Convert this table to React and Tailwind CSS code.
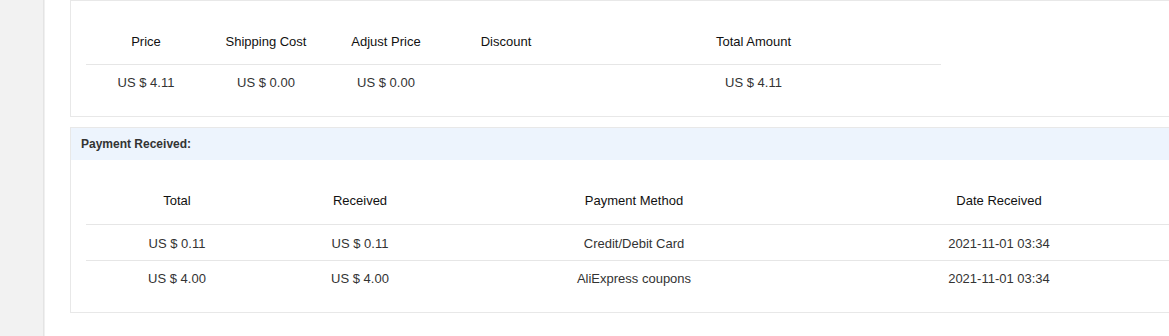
export default function App() {
  const font = { fontFamily: '"Liberation Sans", Arial, sans-serif' };
  const priceCols = ["Price", "Shipping Cost", "Adjust Price", "Discount", "Total Amount"];
  const priceVals = ["US $ 4.11", "US $ 0.00", "US $ 0.00", "", "US $ 4.11"];
  const payments = [
    ["US $ 0.11", "US $ 0.11", "Credit/Debit Card", "2021-11-01 03:34"],
    ["US $ 4.00", "US $ 4.00", "AliExpress coupons", "2021-11-01 03:34"],
  ];
  const payCols = ["Total", "Received", "Payment Method", "Date Received"];
  const payWidths = ["w-[182px]", "w-[184px]", "w-[364px]", "w-[366px]"];
  const priceWidths = ["w-[120px]", "w-[120px]", "w-[120px]", "w-[120px]", "w-[375px]"];

  return (
    <div className="flex w-[1169px] h-[336px] overflow-hidden bg-white text-[13px] text-[#333]" style={font}>
      {/* side rail */}
      <div className="w-[43px] shrink-0 bg-[#f2f2f2]" />
      <div className="w-px shrink-0 bg-[#e4e4e4]" />
      <div className="w-px shrink-0 bg-[#f0f0f0]" />

      <div className="flex flex-col shrink-0 pl-[25px]">
        {/* order amount */}
        <div className="w-[1131px] border border-[#e8e8e8] border-r-0 px-[15px] pt-[17px] pb-[15px]">
          <table className="border-collapse">
            <thead>
              <tr className="h-[46px] border-b border-[#e6e6e6]">
                {priceCols.map((c, i) => (
                  <th key={c} className={`${priceWidths[i]} font-normal text-[#111] text-center pt-[1px]`}>{c}</th>
                ))}
              </tr>
            </thead>
            <tbody>
              <tr className="h-[37px]">
                {priceVals.map((v, i) => (
                  <td key={i} className="text-center">{v}</td>
                ))}
              </tr>
            </tbody>
          </table>
        </div>

        {/* payment received */}
        <div className="mt-[10px] w-[1131px] border border-[#e8e8e8] border-r-0">
          <div className="h-[32px] bg-[#edf4fd] flex items-center pl-[10px] text-[12px] font-bold text-[#333]">
            Payment Received:
          </div>
          <div className="px-[15px] pt-[18px] pb-[16px]">
            <table className="border-collapse">
              <thead>
                <tr className="h-[46px] border-b border-[#e6e6e6]">
                  {payCols.map((c, i) => (
                    <th key={c} className={`${payWidths[i]} font-normal text-[#111] text-center`}>{c}</th>
                  ))}
                </tr>
              </thead>
              <tbody>
                {payments.map((row, r) => (
                  <tr key={r} className={`h-[36px] ${r === 0 ? "border-b border-[#e6e6e6]" : ""}`}>
                    {row.map((v, i) => (
                      <td key={i} className={`text-center ${r === 0 ? "pt-[3px]" : "pt-0"}`}>{v}</td>
                    ))}
                  </tr>
                ))}
              </tbody>
            </table>
          </div>
        </div>
      </div>
    </div>
  );
}
